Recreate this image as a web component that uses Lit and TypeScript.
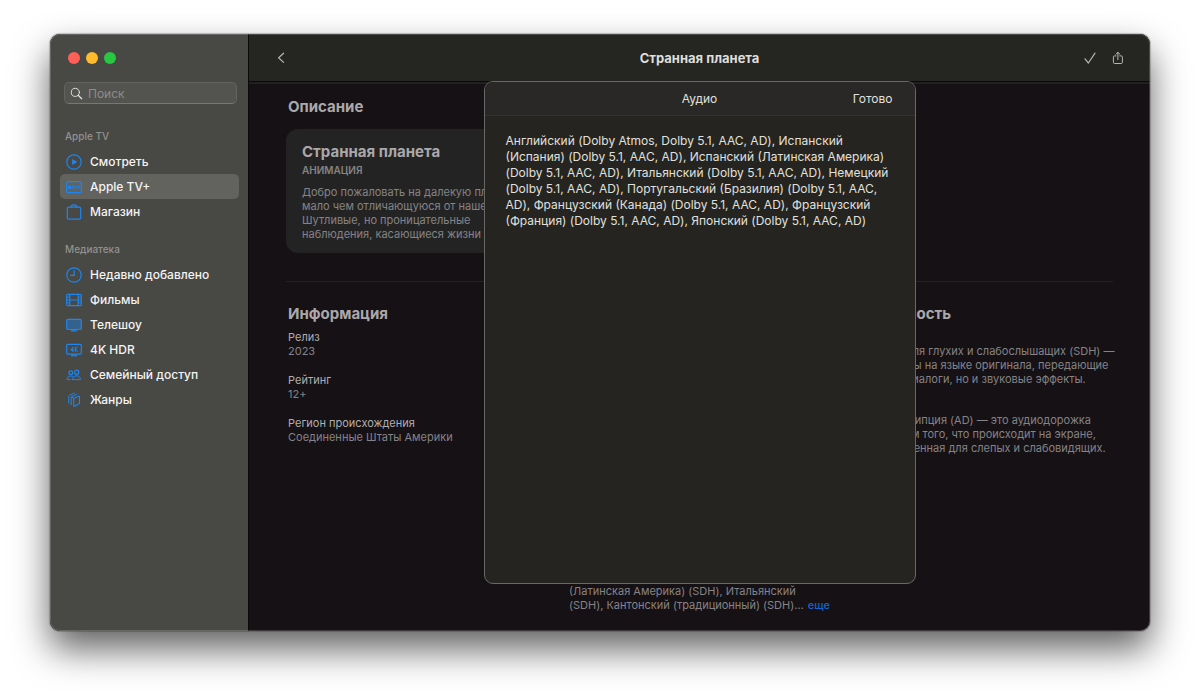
import { LitElement, html, svg, css, TemplateResult } from "lit";
import { customElement, property } from "lit/decorators.js";
import { classMap } from "lit/directives/class-map.js";

const icon = (body: TemplateResult, size = 16) => html`
  <svg width=${size} height=${size} viewBox="0 0 16 16" fill="none" stroke="currentColor"
    stroke-width="1.2" stroke-linecap="round" stroke-linejoin="round" aria-hidden="true">${body}</svg>`;

const icons: Record<string, TemplateResult> = {
  play: svg`<circle cx="8" cy="8" r="7.2"/><path d="M6.2 5v6l5-3z" fill="currentColor" stroke="none"/>`,
  tvplus: svg`<rect x=".7" y="2.6" width="14.6" height="11" rx="1.2"/>
    <path d="M4 6.9c-1.3-.5-2.1.4-2.1 1.4 0 1.2.9 2.2 2.1 1.6.8.4 1.4-.2 1.6-.9-.7-.3-.7-1.2 0-1.6-.4-.6-1-.7-1.6-.5z" fill="currentColor" stroke="none"/>
    <path d="M6.9 6.2v3.3h.8M6.3 7.2h1.5M8.6 7.3l1 2.4 1-2.4M12.6 6.9v2.6M11.4 8.2h2.4" stroke-width=".8"/>`,
  bag: svg`<rect x="1.3" y="3.2" width="13.4" height="12" rx="1.5"/><path d="M5 3C5.5.2 10.5.2 11 3"/>`,
  clock: svg`<circle cx="8" cy="8" r="7.2"/><path d="M8.2 3.6v4.8H4.6"/>`,
  film: svg`<rect x=".7" y="2.3" width="14.6" height="11.4" rx="1"/><path d="M3.8 2.5v11M12.2 2.5v11M3.8 8h8.4"/>
    <path d="M.9 5.2h2.6M.9 8h2.6M.9 10.8h2.6M12.5 5.2h2.6M12.5 8h2.6M12.5 10.8h2.6" stroke-width="1"/>`,
  tv: svg`<rect x=".7" y="2.3" width="14.6" height="10.2" rx="1" fill="currentColor" fill-opacity=".42"/><path d="M5.4 13.9h5.2" stroke-width="1.4"/>`,
  fourk: svg`<rect x=".7" y="2.3" width="14.6" height="9.8" rx="1"/><path d="M5.4 13.7h5.2"/>
    <path d="M6.8 9.5V5L4.9 8.2h2.6M9.3 5v4.5M11.3 5 9.5 7.2l1.9 2.3" stroke-width="1"/>`,
  people: svg`<circle cx="4.8" cy="5.8" r="1.9"/><circle cx="10.7" cy="5.3" r="2.1"/>
    <path d="M6.4 12.6h8c.1-2.3-1.4-3.8-3.7-3.8S6.5 10.3 6.4 12.6zM4.2 12.5H1.2c-.1-2.1 1.3-3.4 3.4-3.4.8 0 1.4.2 1.9.5" stroke-width="1"/>`,
  genres: svg`<path d="M7.7 6.4l4.9-2.2c.5-.2.9 0 .9.6v6c0 .4-.2.8-.6 1l-4.5 2.5c-.4.2-.7 0-.7-.5z" stroke-width="1.1"/>
    <path d="M5.2 12.6V5.6c0-.5.2-.8.6-1l5-2.5M2.8 11.2V4.4c0-.5.2-.8.6-1L8.2 1.2M7.6 6.3 5.4 4.9" stroke-width="1"/>`,
};

@customElement("side-item")
class SideItem extends LitElement {
  @property() glyph = "";
  @property() label = "";
  @property({ type: Boolean }) active = false;

  static styles = css`
    :host { display: block; }
    .link {
      display: flex; align-items: center; gap: 8px; height: 25px; padding: 0 6px;
      border-radius: 5px; color: #f4f4f3; text-decoration: none;
      font-size: 12px; font-weight: 500; white-space: nowrap;
    }
    .active { background: #62625f; }
    .glyph { display: flex; color: #1c86f2; }
  `;

  render() {
    return html`<a href="#" class=${classMap({ link: true, active: this.active })}
      aria-current=${this.active ? "page" : "false"}>
      <span class="glyph">${icon(icons[this.glyph])}</span>${this.label}</a>`;
  }
}

@customElement("app-root")
class AppRoot extends LitElement {
  static styles = css`
    * { box-sizing: border-box; }
    :host {
      display: grid; box-sizing: border-box; min-height: 100vh; padding: 34px 50px 66px;
      background: #fff; font-family: Inter, "Noto Sans", sans-serif; font-size: 11px; line-height: 14px;
    }
    h1, h2, h3, p, dl, dd { margin: 0; }
    button { font: inherit; color: inherit; background: none; border: 0; padding: 0; display: flex; }
    .window {
      display: flex; border-radius: 10px; overflow: hidden; background: #161115;
      box-shadow: 0 18px 36px rgba(0, 0, 0, .62), 0 0 1px 1px rgba(0, 0, 0, .2);
      position: relative;
    }
    .window::after {
      content: ""; position: absolute; inset: 0; border-radius: 10px; pointer-events: none;
      border: 1px solid rgba(255, 255, 255, .17);
    }
    .sidebar {
      flex: 0 0 199px; min-width: 0; background: #484845; border-right: 1px solid #0b0a0b;
      padding: 18px 9px 18px 10px;
    }
    .lights { display: flex; gap: 6px; padding-left: 8px; }
    .light { width: 12px; height: 12px; border-radius: 50%; }
    .close { background: #fe5f57; }
    .min { background: #febb2e; }
    .max { background: #28c840; }
    .search {
      display: flex; align-items: center; gap: 5px; height: 22px; margin: 18px 2px 0 4px; padding: 0 5px;
      border: 1px solid #62625f; border-bottom-color: #777774; border-radius: 5px; background: #535350; color: #e2e2e0;
    }
    .search svg { flex: none; }
    .search input {
      flex: 1; width: 100%; min-width: 0; border: 0; padding: 0; outline: 0; background: none; color: #fff;
      font: 12px Inter, "Noto Sans", sans-serif;
    }
    .search input::placeholder { color: #8d8d8a; opacity: 1; }
    .group { font-size: 10px; font-weight: 500; color: #92928f; padding-left: 5px; margin: 25px 0 6px; }
    .group.second { margin: 18px 0 6px; }

    .main { flex: 1; min-width: 0; position: relative; }
    .toolbar {
      display: grid; grid-template-columns: 1fr auto 1fr; align-items: center; height: 48px;
      padding: 0 24px; background: #252522; border-bottom: 1px solid #0a090a; color: #b4b4b2;
    }
    .toolbar h1 { font-size: 13px; line-height: 20px; font-weight: 700; color: #dededc; }
    .actions { display: flex; justify-content: flex-end; gap: 12px; }
    .content { border-top: 2px solid #222122; padding: 13px 37px 16px; color: #858385; }
    h2, .card h3 { font-size: 15px; line-height: 20px; font-weight: 700; color: #aaa8aa; }
    h2 { padding-left: 2px; }
    .card {
      width: 50%; margin-top: 12px; padding: 13px 16px 12px; border-radius: 12px; background: #242324;
      white-space: nowrap;
    }
    .genre { margin: 1px 0 8px; font-size: 10px; font-weight: 600; }
    .info {
      display: grid; grid-template-columns: repeat(3, minmax(0, 1fr)); gap: 16px; margin-top: 28px; padding-top: 22px;
      border-top: 1px solid #252125; white-space: nowrap;
    }
    .list { display: grid; gap: 15px; padding-left: 2px; margin-top: 6px; }
    .list.notes { gap: 13px; }
    dt { color: #b0aeb0; }
    .more { color: #1566cc; text-decoration: none; margin-left: 4px; font-weight: 500; }

    .overlay { position: absolute; inset: 47px 0; display: flex; justify-content: center; }
    .sheet {
      width: min(432px, 100%); background: #252420; border: 1px solid #686866;
      border-radius: 9px; overflow: hidden; color: #e0e0de; font-size: 12px; line-height: 16px;
    }
    .sheet-head {
      display: grid; grid-template-columns: 1fr auto 1fr; align-items: center; height: 34px; padding: 0 22px;
      background: #292826; border-bottom: 1px solid #33322f;
    }
    .sheet-head h2 { grid-column: 2; font-size: 12px; line-height: 16px; font-weight: 400; color: #e0e0de; padding: 0; }
    .sheet-head button { justify-self: end; }
    .sheet-body { padding: 17px 21px; white-space: nowrap; }
  `;

  render() {
    return html`
      <div class="window">
        <aside class="sidebar">
          <div class="lights">
            <button class="light close" aria-label="Закрыть"></button>
            <button class="light min" aria-label="Свернуть"></button>
            <button class="light max" aria-label="Развернуть"></button>
          </div>
          <label class="search">
            ${icon(svg`<circle cx="6.6" cy="6.6" r="5"/><path d="M10.4 10.4l4 4" stroke-width="1.5"/>`, 13)}
            <input type="search" placeholder="Поиск" aria-label="Поиск" />
          </label>
          <nav>
            <div class="group">Apple TV</div>
            <side-item glyph="play" label="Смотреть"></side-item>
            <side-item glyph="tvplus" label="Apple TV+" active></side-item>
            <side-item glyph="bag" label="Магазин"></side-item>
            <div class="group second">Медиатека</div>
            <side-item glyph="clock" label="Недавно добавлено"></side-item>
            <side-item glyph="film" label="Фильмы"></side-item>
            <side-item glyph="tv" label="Телешоу"></side-item>
            <side-item glyph="fourk" label="4K HDR"></side-item>
            <side-item glyph="people" label="Семейный доступ"></side-item>
            <side-item glyph="genres" label="Жанры"></side-item>
          </nav>
        </aside>
        <main class="main">
          <header class="toolbar">
            <button aria-label="Назад">${icon(svg`<path d="M10.6 3.2 5.6 7.8l5 4.6"/>`)}</button>
            <h1>Странная планета</h1>
            <div class="actions">
              <button aria-label="Добавлено">${icon(svg`<path d="M3 8.8l3.4 4.2L13 3.2"/>`)}</button>
              <button aria-label="Поделиться">${icon(svg`<path d="M6 5.9H4.6c-.8 0-1.2.4-1.2 1.2v5.2c0 .8.4 1.2 1.2 1.2h6.6c.8 0 1.2-.4 1.2-1.2V7.1c0-.8-.4-1.2-1.2-1.2H9.8M7.9 9.7V2.4M5.9 4.3l2-2 2 2" stroke-width="1"/>`)}</button>
            </div>
          </header>
          <div class="content">
            <h2>Описание</h2>
            <article class="card">
              <h3>Странная планета</h3>
              <p class="genre">АНИМАЦИЯ</p>
              <p>Добро пожаловать на далекую планету,<br />мало чем отличающуюся от нашей.<br />Шутливые, но проницательные<br />наблюдения, касающиеся жизни</p>
            </article>
            <div class="info">
              <section>
                <h2>Информация</h2>
                <dl class="list">
                  <div><dt>Релиз</dt><dd>2023</dd></div>
                  <div><dt>Рейтинг</dt><dd>12+</dd></div>
                  <div><dt>Регион происхождения</dt><dd>Соединенные Штаты Америки</dd></div>
                </dl>
              </section>
              <section>
                <h2>Языки</h2>
                <dl class="list">
                  <div><dt>Оригинальное аудио</dt><dd>Английский</dd></div>
                  <div><dt>Аудио</dt><dd>Английский (Dolby Atmos, Dolby 5.1,<br />AAC, AD), Испанский (Испания)<br />(Dolby 5.1, AAC, AD), Испанский<br />(Латинская Америка) (Dolby 5.1, AAC,<br />AD), Итальянский (Dolby 5.1, AAC,<br />AD), Немецкий (Dolby 5.1, AAC, AD),<br />Португальский (Бразилия)…</dd></div>
                  <div><dt>Субтитры</dt><dd>Английский (SDH), Арабский (SDH),<br />Болгарский (SDH), Венгерский<br />(SDH), Вьетнамский (SDH), Греческий<br />(SDH), Датский (SDH), Иврит (SDH),<br />(Канада) (SDH), Испанский (Индия)<br />(Латинская Америка) (SDH), Итальянский<br />(SDH), Кантонский (традиционный) (SDH)…<a class="more" href="#">еще</a></dd></div>
                </dl>
              </section>
              <section>
                <h2>Доступность</h2>
                <dl class="list notes">
                  <div><dt>SDH</dt><dd>Субтитры для глухих и слабослышащих (SDH) —<br />это субтитры на языке оригинала, передающие<br />не только диалоги, но и звуковые эффекты.</dd></div>
                  <div><dt>AD</dt><dd>Аудиодескрипция (AD) — это аудиодорожка<br />с описанием того, что происходит на экране,<br />предназначенная для слепых и слабовидящих.</dd></div>
                </dl>
              </section>
            </div>
          </div>
          <div class="overlay">
            <section class="sheet" role="dialog" aria-label="Аудио">
              <header class="sheet-head"><h2>Аудио</h2><button>Готово</button></header>
              <p class="sheet-body">Английский (Dolby Atmos, Dolby 5.1, AAC, AD), Испанский<br />(Испания) (Dolby 5.1, AAC, AD), Испанский (Латинская Америка)<br />(Dolby 5.1, AAC, AD), Итальянский (Dolby 5.1, AAC, AD), Немецкий<br />(Dolby 5.1, AAC, AD), Португальский (Бразилия) (Dolby 5.1, AAC,<br />AD), Французский (Канада) (Dolby 5.1, AAC, AD), Французский<br />(Франция) (Dolby 5.1, AAC, AD), Японский (Dolby 5.1, AAC, AD)</p>
            </section>
          </div>
        </main>
      </div>`;
  }
}
